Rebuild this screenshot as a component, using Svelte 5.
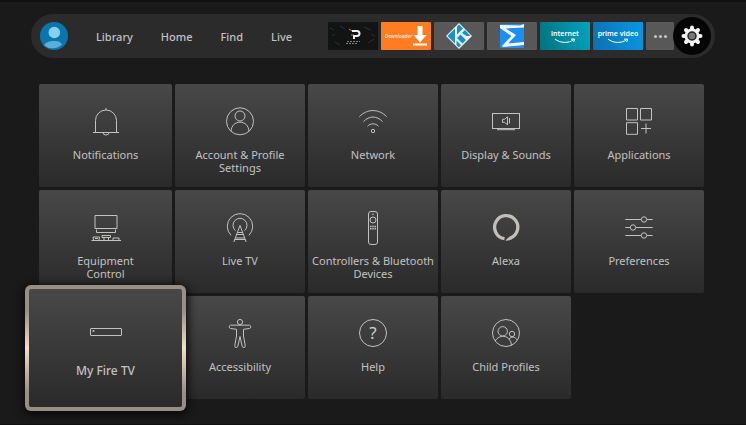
<script>
	const links = ['Library', 'Home', 'Find', 'Live'];

	let selected = $state('My Fire TV');

	const tiles = [
		{ icon: 'bell', label: 'Notifications' },
		{ icon: 'account', label: 'Account & Profile\nSettings' },
		{ icon: 'wifi', label: 'Network' },
		{ icon: 'display', label: 'Display & Sounds' },
		{ icon: 'apps', label: 'Applications' },
		{ icon: 'equipment', label: 'Equipment\nControl' },
		{ icon: 'antenna', label: 'Live TV' },
		{ icon: 'remote', label: 'Controllers & Bluetooth\nDevices' },
		{ icon: 'alexa', label: 'Alexa' },
		{ icon: 'sliders', label: 'Preferences' },
		{ icon: 'stick', label: 'My Fire TV' },
		{ icon: 'person', label: 'Accessibility' },
		{ icon: 'help', label: 'Help' },
		{ icon: 'children', label: 'Child Profiles' }
	];
</script>

{#snippet smile()}
	<svg class="smile" viewBox="0 0 22 6" aria-hidden="true">
		<path d="M1 1C6 5.400 15 5.400 19.500 1.800M17 1.200L20.500 1L19.800 4" />
	</svg>
{/snippet}

{#snippet icon(name)}
	<svg class="icon" viewBox="0 0 40 40" aria-hidden="true">
		{#if name === 'bell'}
			<path d="M9.500 31.500V19.500a10.500 10.500 0 0 1 21 0V31.500M7 31.500H33M20 9V7M17 31.500a3 2.500 0 0 0 6 0" />
		{:else if name === 'account'}
			<circle cx="20" cy="20.300" r="13.500" />
			<circle cx="20" cy="15" r="5" />
			<path d="M11 30.300C11.500 24.500 15 21.200 20 21.200S28.500 24.500 29 30.300" />
		{:else if name === 'wifi'}
			<path d="M6.300 15.800C14 7.500 26 7.500 33.700 15.800M10.500 20.700C16 14.500 24 14.500 29.500 20.700M14.500 25.300C17.500 22 22.500 22 25.500 25.300" />
			<circle cx="20" cy="30" r="1.700" />
		{:else if name === 'display'}
			<rect x="6.500" y="12.500" width="27" height="15" />
			<path d="M11 28.700H29" />
			<path d="M16.500 18.300h2l3-2.500v8l-3-2.500h-2zM23.500 17v5.500" />
		{:else if name === 'apps'}
			<path d="M7.500 7.500h11v11.500h-11zM21.500 7.500h11v11.500h-11zM7.500 21.700h11v11.600h-11zM22 27.500h10M27 22.500v10" />
		{:else if name === 'equipment'}
			<path d="M9 8.500h22v13h-22zM10.500 22.500v3h19v-3M5.500 33.500h29.500M7.500 33l-.5-3h6.500l-.5 3M9 31.500h3M16 28.500h8.500v2h-8.500zM18 31v2M22.500 31v2M27 33v-2h6v2" />
		{:else if name === 'antenna'}
			<path d="M11 28.300A12.700 12.700 0 1 1 29 28.300M15.300 23.500A7 7 0 1 1 24.700 23.500" />
			<path d="M13.800 35L20 18.500L26.200 35M17 27.500h6M15.500 31h9M15 32.500h10M17.500 25.500h5" />
		{:else if name === 'remote'}
			<rect x="15.500" y="4.500" width="9" height="33" rx="2.500" />
			<circle cx="20" cy="13" r="3" />
			<circle class="solid" cx="20" cy="7.300" r=".8" />
			<path class="keys" d="M17 19.500h6M17 21.700h6" />
		{:else if name === 'alexa'}
			<path class="ring" d="M18.500 31.700A11.600 11.600 0 1 1 24.500 31" />
			<path class="solid" d="M25.500 32.400C23.500 33.400 22 33.700 19.600 33.800C20.500 32 22 30.800 24.500 29z" />
		{:else if name === 'sliders'}
			<path d="M6.300 12.500h16M28 12.500h5.700M6.300 20.500h5M17 20.500h16.700M6.300 28.500h16M28 28.500h5.700" />
			<circle cx="25" cy="12.500" r="2.700" />
			<circle cx="14" cy="20.500" r="2.700" />
			<circle cx="25" cy="28.500" r="2.700" />
		{:else if name === 'stick'}
			<rect x="4.500" y="16.500" width="31" height="7" rx=".5" />
			<circle class="solid" cx="7.500" cy="19" r="1" />
		{:else if name === 'person'}
			<circle cx="20" cy="9" r="2.600" />
			<path d="M10.500 12.200h19a1.700 1.700 0 0 1 0 3.300l-6 .8v6.700l1.700 9.500a1.400 1.400 0 0 1-3 .8L20 23.500L17.800 33.300a1.400 1.400 0 0 1-3-.8l1.700-9.500v-6.700l-6-.8a1.700 1.700 0 0 1 0-3.300z" />
		{:else if name === 'help'}
			<circle cx="20" cy="20" r="13.500" />
			<text x="20" y="26">?</text>
		{:else if name === 'children'}
			<circle cx="20" cy="20" r="13.500" />
			<circle cx="16.700" cy="18.300" r="4.700" />
			<circle cx="26" cy="21" r="2.700" />
			<path d="M9 28C12.500 22.500 19 22 22.500 25.500Q25.500 28.500 25.500 32.300M23 26C26 23 29.500 24 31.300 27" />
		{/if}
	</svg>
{/snippet}

<div class="screen">
	<header>
		<button class="avatar" aria-label="Profile">
			<svg viewBox="0 0 28 28" aria-hidden="true">
				<circle cx="14" cy="14" r="14" fill="#0b76ad" />
				<path d="M4 23.500C6 20 9 19 14 19s6.500 1 8 3.500A14 14 0 0 1 4 23.500z" fill="#58b0d6" />
				<circle cx="14.300" cy="10.500" r="5.800" fill="#86d0ec" />
			</svg>
		</button>

		<nav>
			{#each links as link}
				<a href="#{link.toLowerCase()}">{link}</a>
			{/each}
		</nav>

		<div class="shortcuts">
			<button class="app dark" aria-label="Player">
				<svg viewBox="0 0 50 28" aria-hidden="true">
					<path d="M2 6l4 2M7 20l5 3M12 4l5 3M36 5l7 3M40 21l6-4M4 14l3-2M43 12l4 2" stroke="#28332f" />
					<path d="M19 19.500h13M18 21.500h12" stroke="#7d8480" stroke-dasharray="2 1" />
					<path d="M24 9h5a2 2 0 0 1 0 5h-3v3" stroke="#f0f0f0" stroke-width="2" fill="none" />
					<path d="M21 7l3 2M23 13h3" stroke="#c98b54" />
				</svg>
			</button>
			<button class="app orange">
				<span>Downloader</span>
				<svg viewBox="0 0 14 20" aria-hidden="true">
					<path d="M4.500 0h5v9H13.500L7 16.500L.5 9h4zM0 17.500h14v2H0z" fill="#fff" />
				</svg>
			</button>
			<button class="app" aria-label="Kodi">
				<svg class="logo" viewBox="0 0 26 26" aria-hidden="true">
					<path d="M13 0L26 13L13 26L0 13z" fill="#e9f4fa" />
					<path d="M13 1.500l4 4L11 11.500V3.500zM19 7l5.500 6l-4 0L16 10zM9 5.500v15L1.500 13zM14.500 11.500l5.500 5.500l-3.500 3.500l-5.500-5.500zM10.500 17.500l4.500 4.500l-2 2.500l-2.500-2.500z" fill="#198fc7" />
				</svg>
			</button>
			<button class="app" aria-label="File manager">
				<svg class="logo" viewBox="0 0 26 26" aria-hidden="true">
					<path d="M1 1h24v24h-24z" fill="#1c8ff2" />
					<path d="M1 2L21 2.500L25 1v3.500L6.500 5.500L17 12L9 20.500l16-1.500v3L4 24l-1-1L12.500 13L1 5z" fill="#fff" />
				</svg>
			</button>
			<button class="app teal"><span>internet</span>{@render smile()}</button>
			<button class="app blue"><span>prime video</span>{@render smile()}</button>
			<button class="app more" aria-label="More apps"><i></i><i></i><i></i></button>
			<button class="settings" aria-label="Settings">
				<svg viewBox="0 0 22 22" aria-hidden="true">
					<path d="M11 2.500V19.500M2.500 11H19.500M5 5L17 17M17 5L5 17" stroke="#f1f1f1" stroke-width="4" stroke-linecap="round" />
					<circle cx="11" cy="11" r="7.500" fill="#f1f1f1" />
					<circle cx="11" cy="11" r="4" fill="#777" stroke="#222" stroke-width="1.500" />
				</svg>
			</button>
		</div>
	</header>

	<main>
		{#each tiles as tile}
			<button
				class="tile"
				class:focused={selected === tile.label}
				onclick={() => (selected = tile.label)}
			>
				{@render icon(tile.icon)}
				<span class="label">{tile.label}</span>
			</button>
		{/each}
	</main>
</div>

<style>
	:global(body) {
		margin: 0;
		background: #1a1a1a;
	}

	.screen {
		box-sizing: border-box;
		min-height: 100vh;
		padding: 12px 31px 14px;
		border-top: 2px solid #101010;
		border-bottom: 1px solid #101010;
		background: #1a1a1a;
		color: #c2c2c0;
		font-family: 'Noto Sans', 'Open Sans', sans-serif;
		font-size: 11px;
	}

	button {
		margin: 0;
		padding: 0;
		border: 0;
		background: none;
		color: inherit;
		font: inherit;
		cursor: pointer;
	}

	svg {
		display: block;
	}

	header {
		display: flex;
		align-items: center;
		height: 44px;
		padding: 0 4px 0 9px;
		border-radius: 22px;
		background: #2b2b2b;
	}

	.avatar svg {
		width: 28px;
		height: 28px;
	}

	nav {
		display: flex;
		gap: 28px;
		margin-left: 28px;
	}

	nav a {
		color: #c2c2c0;
		font-weight: 500;
		text-decoration: none;
	}

	.shortcuts {
		display: flex;
		align-items: center;
		gap: 3px;
		margin-left: auto;
	}

	.app {
		display: flex;
		flex-direction: column;
		align-items: center;
		justify-content: center;
		width: 50px;
		height: 28px;
		border-radius: 1px;
		background: #585858;
		color: #fff;
		overflow: hidden;
	}

	.app.dark {
		background: #111413;
	}

	.app.dark svg {
		width: 50px;
		height: 28px;
	}

	.app.orange {
		flex-direction: row;
		gap: 1px;
		background: #ff7c20;
		font-size: 5px;
		font-style: italic;
	}

	.orange svg {
		width: 14px;
		height: 20px;
	}

	.logo {
		width: 26px;
		height: 26px;
	}

	.app.teal {
		background: linear-gradient(75deg, #04727f, #02a3c1);
	}

	.app.blue {
		background: linear-gradient(75deg, #0d70b0, #0a97e4);
	}

	.teal span,
	.blue span {
		font-size: 7px;
		font-weight: 600;
		line-height: 9px;
		white-space: nowrap;
	}

	.smile {
		width: 22px;
		height: 6px;
		fill: none;
		stroke: #fff;
	}

	.app.more {
		flex-direction: row;
		gap: 2px;
		width: 28px;
	}

	.more i {
		width: 3px;
		height: 3px;
		border-radius: 50%;
		background: #c4c4c4;
	}

	.settings {
		display: flex;
		align-items: center;
		justify-content: center;
		width: 38px;
		height: 38px;
		margin-left: -4px;
		border-radius: 50%;
		background: #050505;
	}

	.settings svg {
		width: 22px;
		height: 22px;
	}

	main {
		display: grid;
		grid-template-columns: 133fr repeat(4, 130fr);
		grid-auto-rows: minmax(103px, auto);
		gap: 3px;
		margin: 26px 11px 0 8px;
	}

	.tile {
		display: flex;
		flex-direction: column;
		align-items: center;
		min-width: 0;
		padding: 17px 2px 8px;
		border-radius: 2px;
		background: linear-gradient(#484848, #2a2a2a);
	}

	.icon {
		flex: none;
		width: 40px;
		height: 40px;
		fill: none;
		stroke: #c2c2c0;
		stroke-width: 1;
	}

	.icon .solid {
		fill: #c2bfbb;
		stroke: none;
	}

	.icon .ring {
		stroke: #c2bfbb;
		stroke-width: 3.3;
	}

	.icon .keys {
		stroke-width: 1.5;
		stroke-dasharray: 1.5 0.75;
	}

	.icon text {
		fill: #d0d0ce;
		stroke: none;
		font-size: 17px;
		text-anchor: middle;
	}

	.label {
		margin-top: 7px;
		line-height: 13px;
		white-space: pre-line;
	}

	/* the focused tile grows past its cell, over its neighbours */
	.tile.focused {
		z-index: 1;
		margin: -11px -14px -12px;
		padding: 23px 2px 8px;
		border: 4px solid transparent;
		border-radius: 6px;
		background:
			linear-gradient(#484848, #2a2a2a) padding-box,
			linear-gradient(#978f85 20%, #f3dfc8 50%, #978f85 85%) border-box;
		box-shadow: 0 2px 8px 2px #0a0a0a;
		font-size: 12px;
		font-weight: 500;
	}

	.focused .label {
		margin-top: 11px;
		line-height: 16px;
	}
</style>
